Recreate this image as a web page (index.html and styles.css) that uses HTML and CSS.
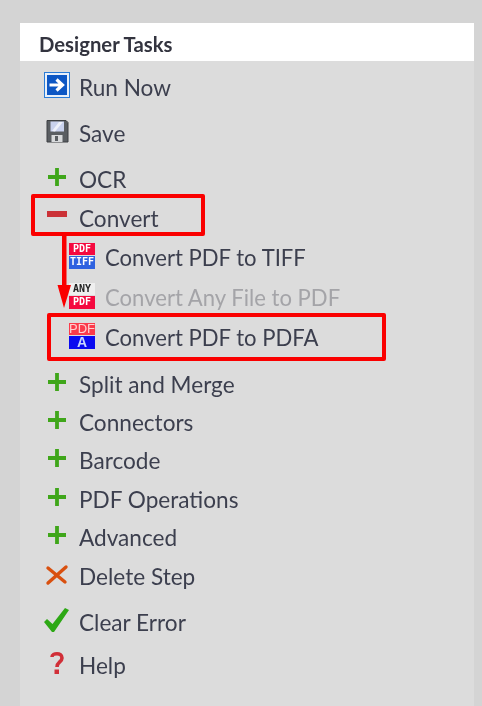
FILE: index.html
```html
<!DOCTYPE html>
<html lang="en">
<head>
<meta charset="utf-8">
<title>Designer Tasks</title>
<link rel="stylesheet" href="styles.css">
</head>
<body>
<div class="panel">
  <div class="header">Designer Tasks</div>
  <ul class="tasks">
    <li class="row">
      <svg class="icon" viewBox="0 0 26 26"><rect x="0.5" y="0.5" width="25" height="25" fill="#e8f0fa" stroke="#2c7cd6"/><rect x="3" y="3" width="20" height="20" fill="#0d57c4"/><path d="M5.5 13H18M12.5 7.5L18.5 13L12.5 18.5" fill="none" stroke="#fff" stroke-width="3.2"/></svg>
      <span>Run Now</span>
    </li>
    <li class="row gap-8">
      <svg class="icon" viewBox="0 0 26 26"><path d="M3 2.5H22L24 4.5V24H3Z" fill="#5a5e62" stroke="#3c3f42"/><rect x="6.5" y="3.5" width="13.5" height="10" fill="#c9d2ee"/><path d="M8 13L15 4H19L11 13.5Z" fill="#eef1fb"/><rect x="7.5" y="17" width="11" height="7" fill="#d8dadc"/><rect x="11" y="18" width="3" height="5" fill="#5a5e62"/></svg>
      <span>Save</span>
    </li>
    <li class="row gap-8">
      <svg class="icon" viewBox="0 0 26 26"><path class="plus" d="M13 4V22M4 13H22"/></svg>
      <span>OCR</span>
    </li>
    <li class="row gap-1">
      <svg class="icon" viewBox="0 0 26 26"><rect x="3" y="8" width="20" height="6" fill="#cb3237"/></svg>
      <span>Convert</span>
    </li>
    <li class="row sub gap-1">
      <div class="badge"><b class="b-red">PDF</b><b class="b-blue">TIFF</b></div>
      <span>Convert PDF to TIFF</span>
    </li>
    <li class="row sub gap-2 disabled">
      <div class="badge"><b class="b-white">ANY</b><b class="b-red">PDF</b></div>
      <span>Convert Any File to PDF</span>
    </li>
    <li class="row sub gap-2">
      <div class="badge"><b class="b-pink">PDF</b><b class="b-navy">A</b></div>
      <span>Convert PDF to PDFA</span>
    </li>
    <li class="row gap-9">
      <svg class="icon" viewBox="0 0 26 26"><path class="plus" d="M13 4V22M4 13H22"/></svg>
      <span>Split and Merge</span>
    </li>
    <li class="row">
      <svg class="icon" viewBox="0 0 26 26"><path class="plus" d="M13 4V22M4 13H22"/></svg>
      <span>Connectors</span>
    </li>
    <li class="row">
      <svg class="icon" viewBox="0 0 26 26"><path class="plus" d="M13 4V22M4 13H22"/></svg>
      <span>Barcode</span>
    </li>
    <li class="row gap-1">
      <svg class="icon" viewBox="0 0 26 26"><path class="plus" d="M13 4V22M4 13H22"/></svg>
      <span>PDF Operations</span>
    </li>
    <li class="row">
      <svg class="icon" viewBox="0 0 26 26"><path class="plus" d="M13 4V22M4 13H22"/></svg>
      <span>Advanced</span>
    </li>
    <li class="row gap-1">
      <svg class="icon" viewBox="0 0 26 26"><path d="M4 7L21 21M22 6L4 22" fill="none" stroke="#d9500f" stroke-width="3.4" stroke-linecap="round"/></svg>
      <span>Delete Step</span>
    </li>
    <li class="row gap-8">
      <svg class="icon" viewBox="0 0 26 26"><path d="M0 15L3 12L8.5 17L21 1L25 3L10 25H8Z" fill="#2da815"/></svg>
      <span>Clear Error</span>
    </li>
    <li class="row gap-5">
      <svg class="icon" viewBox="0 0 26 26"><path d="M8 7C8 3 18 2 18 8C18 12 13 12 13 17" fill="none" stroke="#d12f38" stroke-width="3.6"/><rect x="10.5" y="19.5" width="4.5" height="4.5" fill="#d12f38"/></svg>
      <span>Help</span>
    </li>
  </ul>
</div>
<div class="callout callout-convert"></div>
<div class="callout callout-pdfa"></div>
<svg class="arrow" viewBox="0 0 16 76"><path d="M5 0H9.5V50H14L7 73L0.5 50H5Z" fill="#fa0000"/></svg>
</body>
</html>
```

FILE: styles.css
```css
html, body { margin: 0; height: 100%; }
body {
  width: 482px;
  height: 706px;
  overflow: hidden;
  position: relative;
  box-sizing: border-box;
  padding: 23px 8px 0 20px;
  background: #d4d4d4;
  font-family: "Lato", "Open Sans", sans-serif;
  color: #3c3f4e;
}
.panel {
  height: 683px;
  background: #dcdcdc;
  filter: blur(0.45px);
}
.header {
  height: 38px;
  box-sizing: border-box;
  padding: 10px 0 0 19px;
  background: #fff;
  font-size: 20.3px;
  line-height: 22px;
  font-weight: 700;
  color: #33343f;
}
.tasks { list-style: none; margin: 0; padding: 7.5px 0 0 24px; }
.row {
  display: flex;
  align-items: center;
  gap: 9px;
  height: 38px;
  font-size: 22.6px;
  line-height: 28px;
}
.sub { padding-left: 25px; gap: 10px; font-size: 22.1px; }
.gap-1 { margin-top: 1px; }
.gap-2 { margin-top: 2px; }
.gap-5 { margin-top: 5px; }
.gap-8 { margin-top: 8px; }
.gap-9 { margin-top: 9px; }
.icon { width: 26px; height: 26px; flex: none; position: relative; top: -3px; }
.plus { fill: none; stroke: #3fa61a; stroke-width: 3.8; }
.disabled { color: #a4a4a8; }
.badge {
  width: 26px;
  height: 26px;
  flex: none;
  display: flex;
  flex-direction: column;
  gap: 1px;
  position: relative;
  top: -2px;
}
.badge b {
  flex: 1;
  display: block;
  text-align: center;
  font-family: "DejaVu Sans Mono", monospace;
  font-size: 10px;
  line-height: 12.5px;
  font-weight: 700;
  color: #fff;
}
.b-red { background: #f5093f; }
.b-blue { background: #2f62e0; }
.b-white { background: #efefef; color: #222 !important; }
.b-pink { background: #fb3a4a; color: #ffd0d0 !important; font-family: "Liberation Sans", sans-serif !important; font-size: 13px !important; font-weight: 400 !important; }
.b-navy { background: #0a0af0; color: #c8d4ff !important; font-family: "Liberation Sans", sans-serif !important; font-size: 14px !important; }
.callout {
  position: absolute;
  box-sizing: border-box;
  border: 4.5px solid #fa0000;
  border-radius: 2px;
}
.callout-convert { left: 31px; top: 194px; width: 174px; height: 42px; }
.callout-pdfa { left: 47px; top: 313px; width: 339px; height: 48px; }
.arrow { position: absolute; left: 56.5px; top: 235px; width: 16px; height: 76px; }
```
